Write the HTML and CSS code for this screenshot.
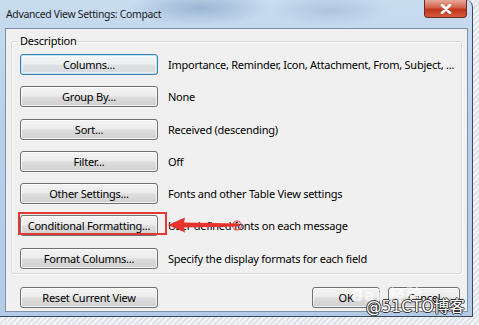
FILE: index.html
```html
<!DOCTYPE html>
<html>
<head>
<meta charset="utf-8">
<link rel="stylesheet" href="styles.css">
</head>
<body>
<div class="window">
  <div class="titlebar">
    <span class="title">Advanced View Settings: Compact</span>
    <div class="close"><svg width="12" height="10" viewBox="0 0 12 10"><path d="M2 1 L10 9 M10 1 L2 9" stroke="#fff" stroke-width="2.6" stroke-linecap="round"/></svg></div>
  </div>
  <div class="client">
    <fieldset class="group">
      <legend class="legend">Description</legend>
      <div class="row"><button class="btn focused">Columns...</button><span class="desc">Importance, Reminder, Icon, Attachment, From, Subject, ...</span></div>
      <div class="row"><button class="btn">Group By...</button><span class="desc">None</span></div>
      <div class="row"><button class="btn">Sort...</button><span class="desc">Received (descending)</span></div>
      <div class="row"><button class="btn">Filter...</button><span class="desc">Off</span></div>
      <div class="row"><button class="btn">Other Settings...</button><span class="desc">Fonts and other Table View settings</span></div>
      <div class="row marked"><button class="btn">Conditional Formatting...</button><span class="desc">User defined fonts on each message</span>
        <div class="redbox"></div>
        <svg class="arrow" width="80" height="18" viewBox="0 0 80 18"><path d="M1 9 L18 1.5 L17 6.5 L72 7.6 L72 10.4 L17 11.5 L18 16.5 Z" fill="#e8322e"/><circle cx="70" cy="9.5" r="4.5" fill="none" stroke="#e8322e" stroke-width="1"/></svg>
      </div>
      <div class="row"><button class="btn">Format Columns...</button><span class="desc">Specify the display formats for each field</span></div>
    </fieldset>
    <div class="footer">
      <button class="btn">Reset Current View</button>
      <div class="spacer"></div>
      <button class="btn ok">OK</button>
      <button class="btn cancel">Cancel</button>
    </div>
    <span class="wm-baidu">Bai 经验</span>
    <span class="wm-cto">@51CTO博客</span>
  </div>
</div>
</body>
</html>
```

FILE: styles.css
```css
html, body {
  margin: 0;
  padding: 0;
}
body {
  width: 479px;
  height: 325px;
  overflow: hidden;
  background: repeating-linear-gradient(135deg, #dfe4ea 0 2px, #f2f4f6 2px 4px);
  font-family: "Noto Sans", "Open Sans", sans-serif;
  font-size: 11px;
  letter-spacing: -0.25px;
  color: #000;
}
.window {
  position: relative;
  width: 473px;
  height: 317px;
  box-sizing: border-box;
  border-right: 1px solid #3b4a5e;
  border-bottom: 1px solid #3b4a5e;
  border-top-right-radius: 7px;
  background:
    radial-gradient(ellipse 70px 18px at 200px 8px, rgba(120,150,185,0.55), transparent),
    radial-gradient(ellipse 60px 16px at 330px 10px, rgba(150,175,205,0.5), transparent),
    linear-gradient(180deg, #c8dcf0 0%, #b8d0ea 40%, #b3cbe6 100%);
  display: flex;
  flex-direction: column;
}
.titlebar {
  height: 28px;
  display: flex;
  align-items: flex-start;
  padding-left: 6px;
  padding-right: 5px;
  box-sizing: border-box;
}
.title {
  font-size: 10.4px;
  letter-spacing: -0.3px;
  line-height: 14px;
  margin-top: 7px;
  color: #1a1a1a;
}
.close {
  margin-left: auto;
  width: 43px;
  height: 18px;
  box-sizing: border-box;
  border: 1px solid #6a2a25;
  border-top: none;
  border-radius: 0 0 4px 4px;
  background: linear-gradient(180deg, #e9a99a 0%, #d2614a 45%, #c0341c 55%, #d45a3c 100%);
  display: flex;
  align-items: center;
  justify-content: center;
}
.client {
  position: relative;
  margin-left: 5px;
  width: 463px;
  height: 284px;
  box-sizing: border-box;
  border: 1px solid #7f90a6;
  background: #f0f0f0;
  display: flex;
  flex-direction: column;
}
.group {
  margin: 4px 5px 0 5px;
  padding: 5px 0 4px 8px;
  border: 1px solid #d5d9de;
  border-radius: 2px;
  box-shadow: inset 1px 1px 0 #fff, 1px 1px 0 #fff;
  display: flex;
  flex-direction: column;
  gap: 11.3px;
}
.legend {
  padding: 0 2px;
  margin-left: -2px;
  line-height: 16px;
}
.row {
  position: relative;
  display: flex;
  align-items: center;
  gap: 10px;
  height: 21px;
}
.btn {
  width: 138px;
  height: 21px;
  box-sizing: border-box;
  border: 1px solid #707070;
  border-radius: 3px;
  background: linear-gradient(180deg, #f3f3f3 0%, #ebebeb 48%, #dddddd 52%, #d0d0d0 100%);
  box-shadow: inset 0 0 0 1px rgba(255,255,255,0.7);
  font-family: inherit;
  font-size: 11px;
  letter-spacing: -0.25px;
  color: #000;
  padding: 0;
  flex-shrink: 0;
}
.btn.focused {
  border-color: #3c7fb1;
  box-shadow: inset 0 0 0 1px #bfe4f8, inset 0 0 0 2px rgba(255,255,255,0.5);
  background: linear-gradient(180deg, #f4f6f8 0%, #eceef0 48%, #dfe2e5 52%, #d5d8dc 100%);
}
.desc {
  white-space: nowrap;
}
.redbox {
  position: absolute;
  left: -2px;
  top: -3px;
  width: 149px;
  height: 23px;
  border: 2px solid #e03a36;
  box-sizing: border-box;
  pointer-events: none;
}
.arrow {
  position: absolute;
  left: 147px;
  top: 1px;
}
.footer {
  display: flex;
  align-items: center;
  margin: 13px 7px 0 14px;
}
.spacer {
  flex: 1;
}
.btn.ok {
  width: 68px;
}
.btn.cancel {
  width: 72px;
  margin-left: 8px;
}
.wm-baidu {
  position: absolute;
  left: 345px;
  top: 253px;
  white-space: nowrap;
  font-size: 16px;
  font-weight: bold;
  color: rgba(255,255,255,0.7);
  letter-spacing: 1px;
  font-family: "DejaVu Sans", "Noto Sans CJK SC", sans-serif;
}
.wm-cto {
  position: absolute;
  left: 360px;
  top: 269px;
  white-space: nowrap;
  font-size: 15.5px;
  line-height: 19px;
  letter-spacing: 0;
  color: #fff;
  font-family: "DejaVu Sans", "Noto Sans CJK SC", sans-serif;
  text-shadow: 1px 0 0 #333, -1px 0 0 #333, 0 1px 0 #333, 0 -1px 0 #333;
}
```
